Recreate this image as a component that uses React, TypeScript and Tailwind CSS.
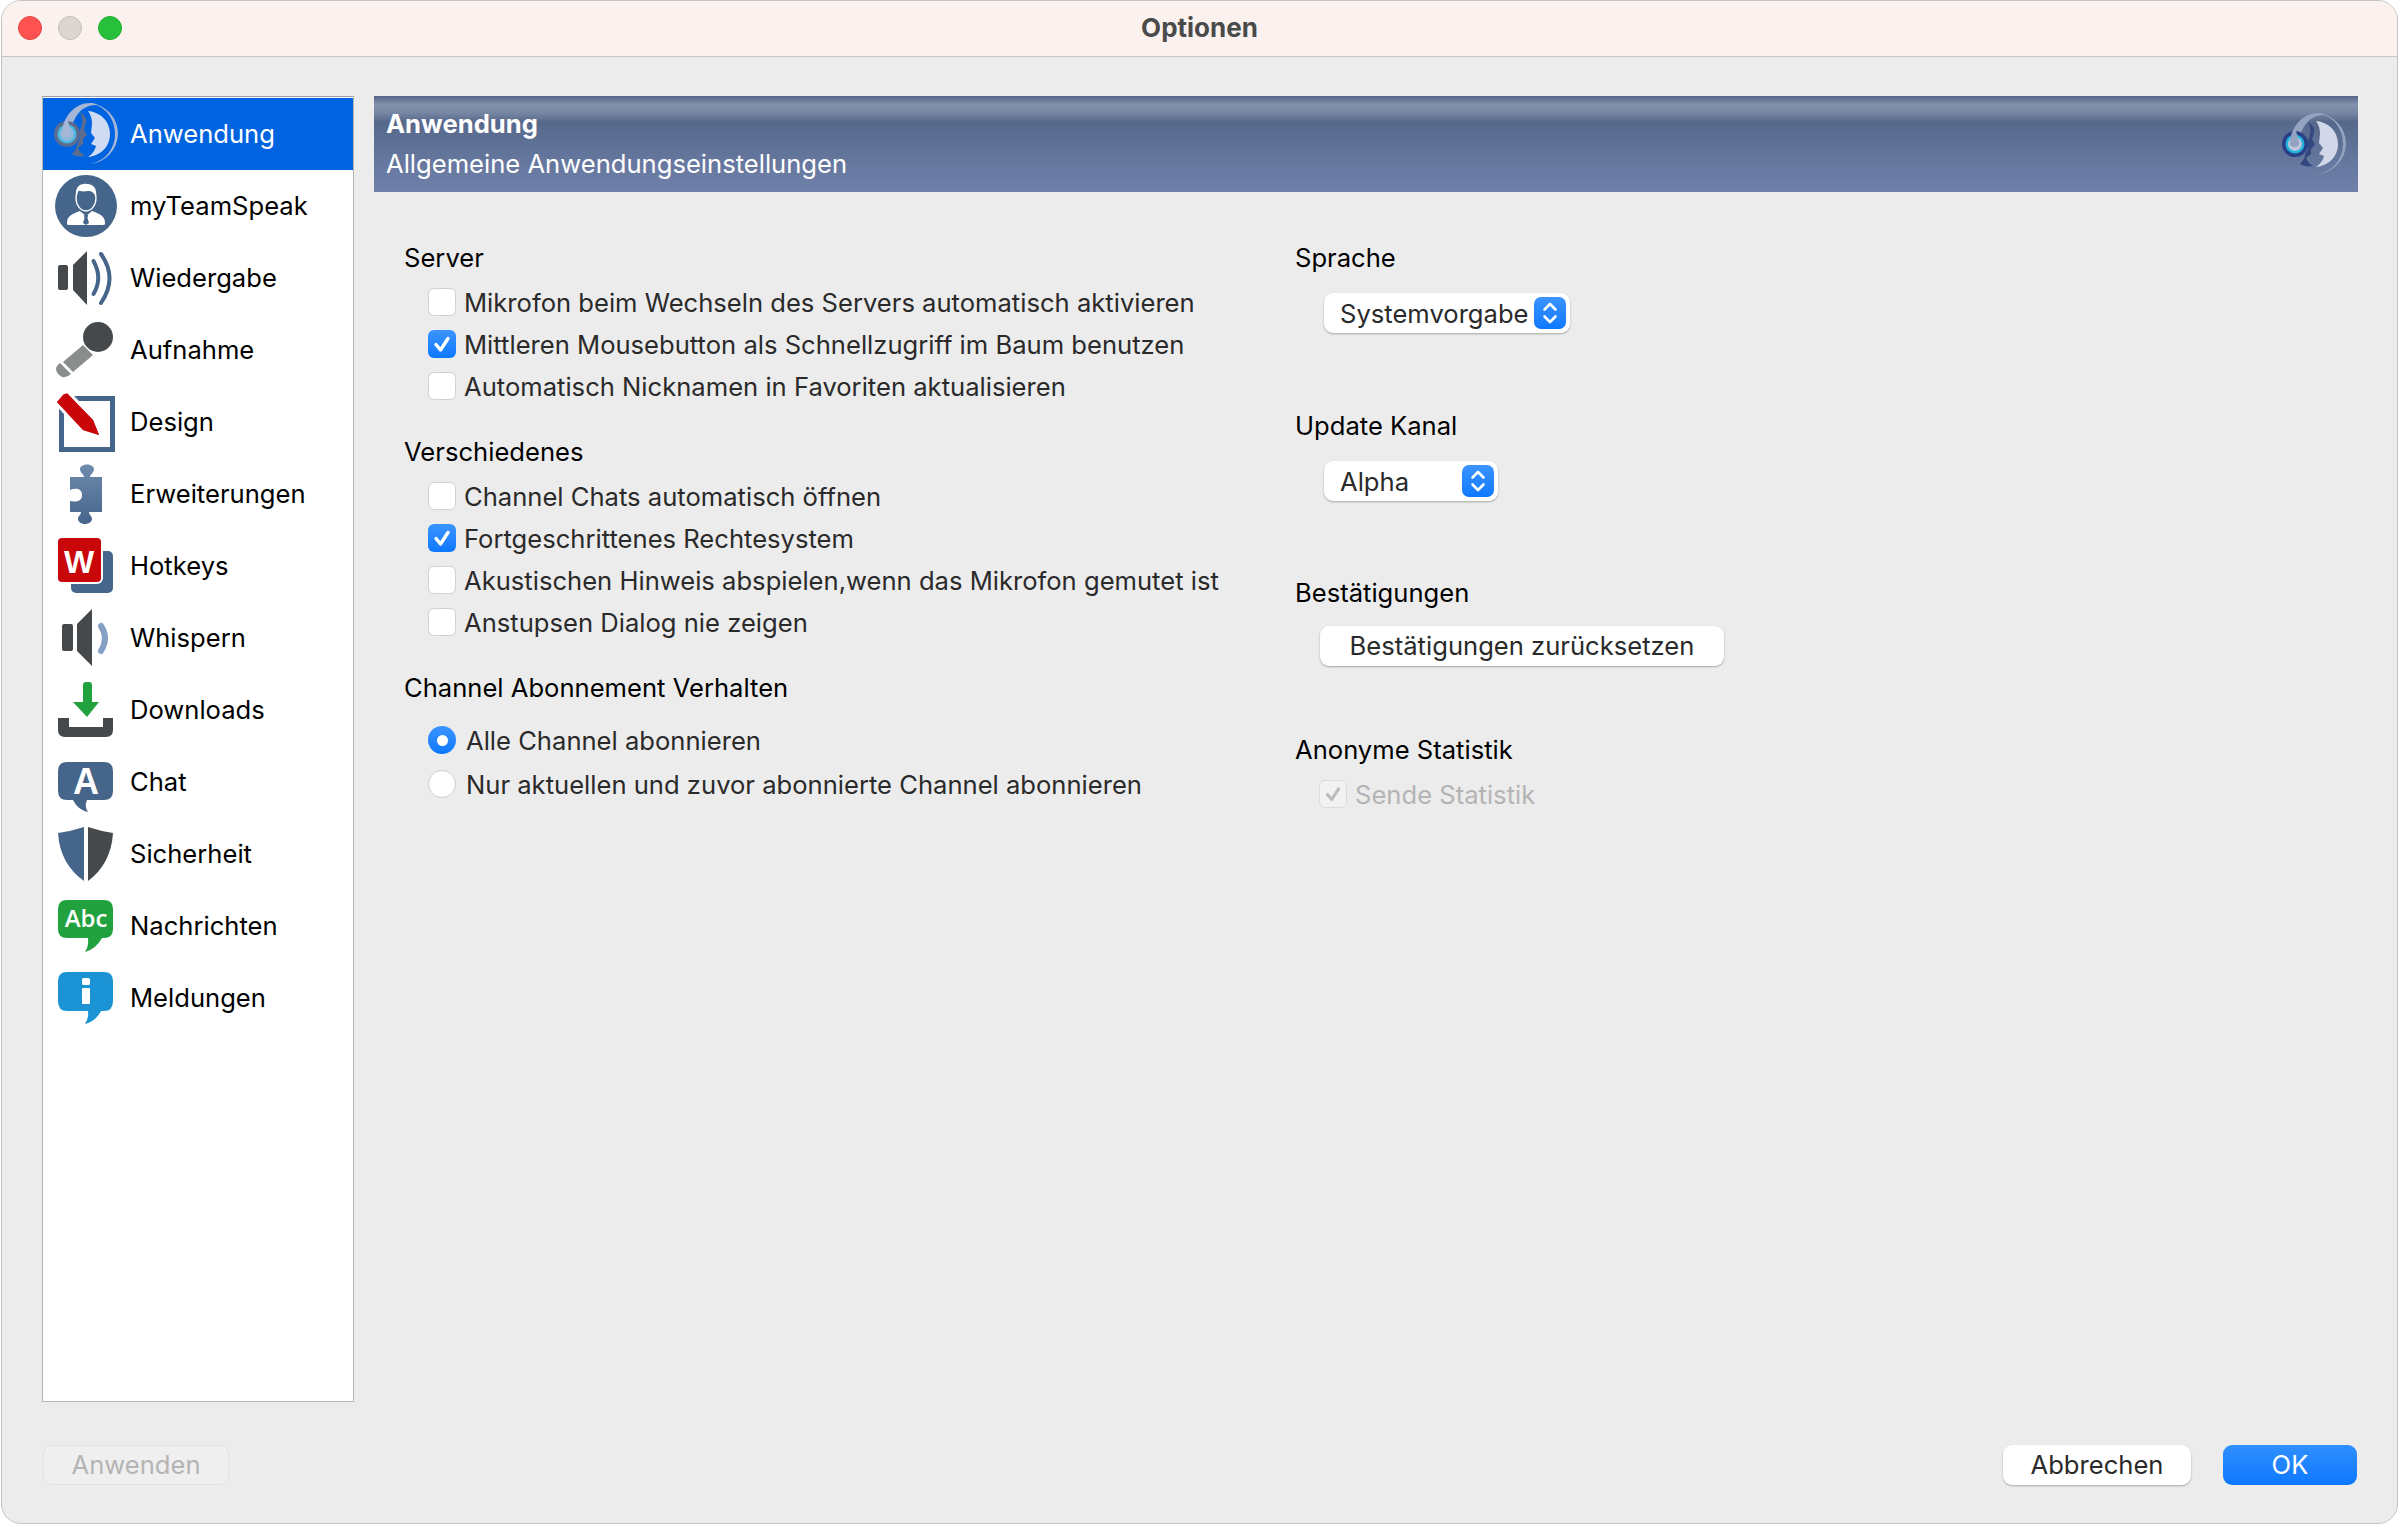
import React from 'react';

const BLUE = '#46658a';
const DARK = '#45494b';

const TsLogo: React.FC<{ header?: boolean }> = ({ header }) => {
  const ring = header ? '#93a3c0' : '#a5b6d6';
  const face = header ? '#33487f' : '#5b6c8e';
  const moon = header ? '#d3d8e8' : '#cfdbf2';
  return (
    <svg viewBox="0 0 64 64" className="h-16 w-16 shrink-0">
      <path d="M36 1 A31 31 0 0 1 64 32 A31 31 0 0 1 36 62 C52 59 61 46 61 32 C61 15 50 4 36 1Z" fill={ring} />
      <path d="M8 32 C9 13 22 0 38 1 C40 1.500 42 2 44 3 C28 2 18 15 17 32Z" fill={ring} />
      <path d="M26 10 C31 13 33 17 32 21 L30 27 L33 33 L29 37 L29 42 L24 46 L27 51 L31 54 C26 55 21 54 18 52 L22 47 L24 40 L26 37 L25 31 L28 23 C29 17 28 14 26 10Z" fill={face} />
      <path d="M34 9 C46 10 56 19 56 32 C56 45 46 54 34 55 C40 51 41 47 42 44 L37 42 L41 36 L37 31 L38 22 C38 17 37 13 34 9Z" fill={moon} />
      <circle cx="13" cy="32" r="13" fill={header ? '#2b3f86' : '#5b6c8e'} />
      <circle cx="13" cy="32" r="9.5" fill={header ? '#1fb4dc' : '#4db8e0'} />
      <circle cx="13" cy="32" r="7" fill={header ? '#b9c6dc' : '#8fb8dc'} />
      <path d="M8 32 C8 26 10 18 14 14 C13 20 17 26 17 32 C17 36 8 36 8 32Z" fill={ring} />
    </svg>
  );
};

const Svg: React.FC<{ children: React.ReactNode }> = ({ children }) => (
  <svg viewBox="0 0 64 64" className="h-16 w-16 shrink-0">
    {children}
  </svg>
);

const icons: Record<string, React.ReactNode> = {
  anwendung: <TsLogo />,
  team: (
    <Svg>
      <circle cx="32" cy="32" r="31" fill={BLUE} />
      <path d="M13 49 C13 42 18 40 26 37 L32 42 L38 37 C46 40 51 42 51 49 L51 50 Q51 51 49 51 L15 51 Q13 51 13 50Z" fill="#fff" />
      <path d="M30 41 L34 41 L33.5 44 L35 49 L32 51 L29 49 L30.5 44Z" fill={BLUE} />
      <ellipse cx="32" cy="24" rx="10" ry="13" fill={BLUE} stroke="#fff" strokeWidth="1.3" />
      <path d="M22 22 C21 12 27 9 33 10 C40 10 43 15 42 23 C40 18 37 17 34 17 C29 18 25 17 24 16 C24 18 23 20 22 22Z" fill="#fff" />
    </Svg>
  ),
  wiedergabe: (
    <Svg>
      <rect x="4" y="19" width="10" height="25" rx="2" fill={DARK} />
      <path d="M19 19 L33 5 L33 59 L19 44Z" fill={DARK} />
      <path d="M39.5 15 Q49 32 39.5 48" fill="none" stroke={BLUE} strokeWidth="4" strokeLinecap="round" />
      <path d="M47 8 Q64 32 47 57" fill="none" stroke={BLUE} strokeWidth="4" strokeLinecap="round" />
    </Svg>
  ),
  aufnahme: (
    <Svg>
      <circle cx="44" cy="19" r="15" fill={DARK} />
      <path d="M29 27 L39 37 L19 54 L9 44Z" fill="#8a8d8d" />
      <path d="M6 45 L17 56 Q13 60 8 59 Q2 56 2 50 Q3 47 6 45Z" fill="#8a8d8d" />
    </Svg>
  ),
  design: (
    <Svg>
      <rect x="7.5" y="8.5" width="51" height="51" fill="none" stroke={BLUE} strokeWidth="5" />
      <path d="M3 12 L13 3 L39 30 L45 45 L29 40Z" fill="#c9060a" stroke="#fff" strokeWidth="6" strokeLinejoin="miter" paintOrder="stroke" />
      <path d="M3 12 L8 6 Q10 3 13 4 L39 30 L45 45 L29 40Z" fill="#c9060a" />
    </Svg>
  ),
  erweiterungen: (
    <Svg>
      <defs>
        <linearGradient id="puzzle" x1="0" y1="0" x2="0" y2="1">
          <stop offset="0" stopColor="#6f8bae" />
          <stop offset="1" stopColor={BLUE} />
        </linearGradient>
      </defs>
      <path d="M16 15 L30 15 C30 12 26 11 26 7 C26 4 30 2.500 33 2.500 C36 2.500 40 4 40 7 C40 11 36 12 36 15 L48 15 L48 50 L35 50 C35 53 38 54 38 57 C38 60 34 62 31 62 C28 62 24 60 24 57 C24 54 27 53 27 50 L16 50 L16 39 C21 40 28 40 28 33 C28 26 21 26 16 28Z" fill="url(#puzzle)" />
    </Svg>
  ),
  hotkeys: (
    <Svg>
      <rect x="17" y="17" width="42" height="42" rx="5" fill={BLUE} />
      <rect x="2" y="2" width="47" height="48" rx="6" fill="#fff" />
      <rect x="4" y="4" width="43" height="44" rx="4" fill="#c9060a" />
      <text x="25" y="39" textAnchor="middle" fontFamily="'Liberation Sans', sans-serif" fontWeight="700" fontSize="32" fill="#fff">W</text>
    </Svg>
  ),
  whispern: (
    <Svg>
      <rect x="8" y="18" width="11" height="27" rx="2" fill={DARK} />
      <path d="M23 18 L38 3 L38 60 L23 45Z" fill={DARK} />
      <path d="M47 20 Q55 32 47 45" fill="none" stroke="#84a0c4" strokeWidth="6" strokeLinecap="round" />
    </Svg>
  ),
  downloads: (
    <Svg>
      <path d="M29 7 Q29 4 32 4 L35 4 Q38 4 38 7 L38 24 L45 24 L33 39 L19 24 L29 24Z" fill="#21a23e" />
      <path d="M4 40 L15 40 L15 49 L49 49 L49 40 L59 40 L59 52 Q59 59 52 59 L11 59 Q4 59 4 52Z" fill={DARK} />
    </Svg>
  ),
  chat: (
    <Svg>
      <path d="M13 12 L50 12 Q59 12 59 21 L59 41 Q59 50 50 50 L33 50 Q30 56 34 62 Q24 60 19 50 L13 50 Q4 50 4 41 L4 21 Q4 12 13 12Z" fill={BLUE} />
      <text x="32" y="44" textAnchor="middle" fontFamily="'Liberation Sans', sans-serif" fontWeight="700" fontSize="36" fill="#fff">A</text>
    </Svg>
  ),
  sicherheit: (
    <Svg>
      <path d="M4 11 Q18 9 30 5 L30 59 Q6 42 4 11Z" fill={BLUE} />
      <path d="M34 5 Q46 9 59 11 Q57 42 34 59Z" fill={DARK} />
    </Svg>
  ),
  nachrichten: (
    <Svg>
      <path d="M13 6 L50 6 Q59 6 59 15 L59 35 Q59 44 50 44 L48 44 Q42 55 31 58 Q35 52 34 44 L13 44 Q4 44 4 35 L4 15 Q4 6 13 6Z" fill="#21a23e" />
      <text x="32" y="33" textAnchor="middle" fontFamily="'Open Sans', sans-serif" fontWeight="600" fontSize="24" fill="#fff">Abc</text>
    </Svg>
  ),
  meldungen: (
    <Svg>
      <path d="M13 6 L50 6 Q59 6 59 15 L59 35 Q59 45 50 45 L47 45 Q42 55 31 58 Q35 52 34 45 L13 45 Q4 45 4 35 L4 15 Q4 6 13 6Z" fill="#1c93d4" />
      <rect x="28" y="12" width="8" height="7" rx="1.500" fill="#fff" />
      <rect x="28" y="22" width="8" height="16" rx="1" fill="#fff" />
    </Svg>
  ),
};

const navItems = [
  { id: 'anwendung', label: 'Anwendung' },
  { id: 'team', label: 'myTeamSpeak' },
  { id: 'wiedergabe', label: 'Wiedergabe' },
  { id: 'aufnahme', label: 'Aufnahme' },
  { id: 'design', label: 'Design' },
  { id: 'erweiterungen', label: 'Erweiterungen' },
  { id: 'hotkeys', label: 'Hotkeys' },
  { id: 'whispern', label: 'Whispern' },
  { id: 'downloads', label: 'Downloads' },
  { id: 'chat', label: 'Chat' },
  { id: 'sicherheit', label: 'Sicherheit' },
  { id: 'nachrichten', label: 'Nachrichten' },
  { id: 'meldungen', label: 'Meldungen' },
];

const Check: React.FC<{ label: string; checked?: boolean }> = ({ label, checked }) => (
  <div className="flex h-[42px] items-center gap-2 pl-6">
    <div
      className={
        checked
          ? 'flex h-7 w-7 items-center justify-center rounded-[6px] bg-gradient-to-b from-[#3a94ff] to-[#0a78ff]'
          : 'h-7 w-7 rounded-[6px] border border-[#d2d2d2] bg-white'
      }
    >
      {checked && (
        <svg viewBox="0 0 28 28" className="h-7 w-7">
          <path d="M8 14.500 L12.500 20 L20 8.500" fill="none" stroke="#fff" strokeWidth="3.400" strokeLinecap="round" strokeLinejoin="round" />
        </svg>
      )}
    </div>
    <span className="pt-px text-[#2a2a2a]">{label}</span>
  </div>
);

const Radio: React.FC<{ label: string; checked?: boolean }> = ({ label, checked }) => (
  <div className="flex h-11 items-center gap-2.5 pl-6">
    {checked ? (
      <div className="flex h-7 w-7 items-center justify-center rounded-full bg-gradient-to-b from-[#3a94ff] to-[#0a78ff]">
        <div className="h-[11px] w-[11px] rounded-full bg-white" />
      </div>
    ) : (
      <div className="h-7 w-7 rounded-full border border-[#cfcfcf] bg-white" />
    )}
    <span className="pt-px text-[#2a2a2a]">{label}</span>
  </div>
);

const Combo: React.FC<{ value: string; width: string }> = ({ value, width }) => (
  <div className={`ml-[29px] flex h-10 items-center justify-between rounded-[9px] bg-white pl-4 pr-1 text-[#2a2a2a] shadow-[0_1px_2px_rgba(0,0,0,0.3)] ${width}`}>
    <span className="pt-px">{value}</span>
    <div className="flex h-8 w-8 items-center justify-center rounded-[7px] bg-gradient-to-b from-[#3a94ff] to-[#0a78ff]">
      <svg viewBox="0 0 32 32" className="h-8 w-8">
        <path d="M10.500 12.500 L16 7 L21.500 12.500 M10.500 19.500 L16 25 L21.500 19.500" fill="none" stroke="#fff" strokeWidth="2.600" strokeLinecap="round" strokeLinejoin="round" />
      </svg>
    </div>
  </div>
);

const Heading: React.FC<{ children: React.ReactNode; className?: string }> = ({ children, className }) => (
  <div className={`flex h-9 items-center text-black ${className ?? ''}`}>{children}</div>
);

export default function App() {
  return (
    <div className="h-[1524px] w-[2402px] bg-white pl-px font-['Inter',sans-serif] text-[25.6px] leading-none">
      <div className="flex h-[1524px] w-[2397px] flex-col overflow-hidden rounded-[20px] border border-[#c4c4c4] bg-[#ececec]">
        <div className="grid h-[56px] shrink-0 grid-cols-[1fr_auto_1fr] items-center border-b border-[#c8c6c4] bg-[#fbf2ef] px-4 pb-[2px]">
          <div className="flex gap-4">
            <div className="h-6 w-6 rounded-full border border-[#e2463f] bg-[#fd5250]" />
            <div className="h-6 w-6 rounded-full border border-[#c5bcb8] bg-[#ddd5d1]" />
            <div className="h-6 w-6 rounded-full border border-[#1fae2d] bg-[#28c03a]" />
          </div>
          <div className="text-[26px] font-bold text-[#4a4a4a]">Optionen</div>
          <div />
        </div>

        <div className="flex flex-1 gap-5 pl-[40px] pt-[39px]">
          <div className="h-[1306px] w-[312px] shrink-0 border border-[#b5b5b5] border-t-[#a0a0a0] bg-white pt-px">
            {navItems.map((item, i) => (
              <div
                key={item.id}
                className={`flex h-[72px] items-center gap-3 pl-[11px] ${i === 0 ? 'bg-[#0064e1] text-white' : 'text-black'}`}
              >
                {icons[item.id]}
                <span>{item.label}</span>
              </div>
            ))}
          </div>

          <div className="w-[1984px]">
            <div className="flex h-[96px] items-center justify-between bg-[linear-gradient(180deg,#56658a_0%,#8391ad_9%,#7585a3_18%,#56688a_27%,#66789f_70%,#7080a9_100%)] pl-3 pr-3 text-white">
              <div>
                <div className="font-bold">Anwendung</div>
                <div className="mt-[14px]">Allgemeine Anwendungseinstellungen</div>
              </div>
              <TsLogo header />
            </div>

            <div className="flex pt-[48px]">
              <div className="w-[921px] pl-[30px]">
                <Heading>Server</Heading>
                <div className="mt-[5px]">
                  <Check label="Mikrofon beim Wechseln des Servers automatisch aktivieren" />
                  <Check checked label="Mittleren Mousebutton als Schnellzugriff im Baum benutzen" />
                  <Check label="Automatisch Nicknamen in Favoriten aktualisieren" />
                </div>
                <Heading className="mt-[27px]">Verschiedenes</Heading>
                <div className="mt-[5px]">
                  <Check label="Channel Chats automatisch öffnen" />
                  <Check checked label="Fortgeschrittenes Rechtesystem" />
                  <Check label="Akustischen Hinweis abspielen,wenn das Mikrofon gemutet ist" />
                  <Check label="Anstupsen Dialog nie zeigen" />
                </div>
                <Heading className="mt-[27px]">Channel Abonnement Verhalten</Heading>
                <div className="mt-[12px]">
                  <Radio checked label="Alle Channel abonnieren" />
                  <Radio label="Nur aktuellen und zuvor abonnierte Channel abonnieren" />
                </div>
              </div>

              <div>
                <Heading>Sprache</Heading>
                <div className="mt-[17px]">
                  <Combo value="Systemvorgabe" width="w-[246px]" />
                </div>
                <Heading className="mt-[75px]">Update Kanal</Heading>
                <div className="mt-[17px]">
                  <Combo value="Alpha" width="w-[174px]" />
                </div>
                <Heading className="mt-[74px]">Bestätigungen</Heading>
                <button className="ml-[25px] mt-[15px] flex h-10 w-[404px] items-center justify-center rounded-[9px] bg-white text-[#2a2a2a] shadow-[0_1px_2px_rgba(0,0,0,0.3)]">
                  Bestätigungen zurücksetzen
                </button>
                <Heading className="mt-[66px]">Anonyme Statistik</Heading>
                <div className="ml-6 mt-[12px] flex h-7 items-center gap-2 text-[#b4b4b4]">
                  <div className="flex h-7 w-7 items-center justify-center rounded-[6px] border border-[#dcdcdc] bg-[#f2f2f2]">
                    <svg viewBox="0 0 28 28" className="h-7 w-7">
                      <path d="M8 14.500 L12.500 20 L20 8.500" fill="none" stroke="#bdbdbd" strokeWidth="3.400" strokeLinecap="round" strokeLinejoin="round" />
                    </svg>
                  </div>
                  <span className="pt-px">Sende Statistik</span>
                </div>
              </div>
            </div>
          </div>
        </div>

        <div className="flex items-start justify-between pb-[38px] pl-[41px] pr-[40px]">
          <button className="flex h-10 w-[186px] items-center justify-center rounded-[9px] border border-[#e2e2e2] bg-[#efefef] text-[#b4b4b4]">
            Anwenden
          </button>
          <div className="flex gap-8">
            <button className="flex h-10 w-[188px] items-center justify-center rounded-[9px] bg-white text-[#2a2a2a] shadow-[0_1px_2px_rgba(0,0,0,0.3)]">
              Abbrechen
            </button>
            <button className="flex h-10 w-[134px] items-center justify-center rounded-[9px] bg-gradient-to-b from-[#2f8fff] to-[#0a78ff] text-white">
              OK
            </button>
          </div>
        </div>
      </div>
    </div>
  );
}
